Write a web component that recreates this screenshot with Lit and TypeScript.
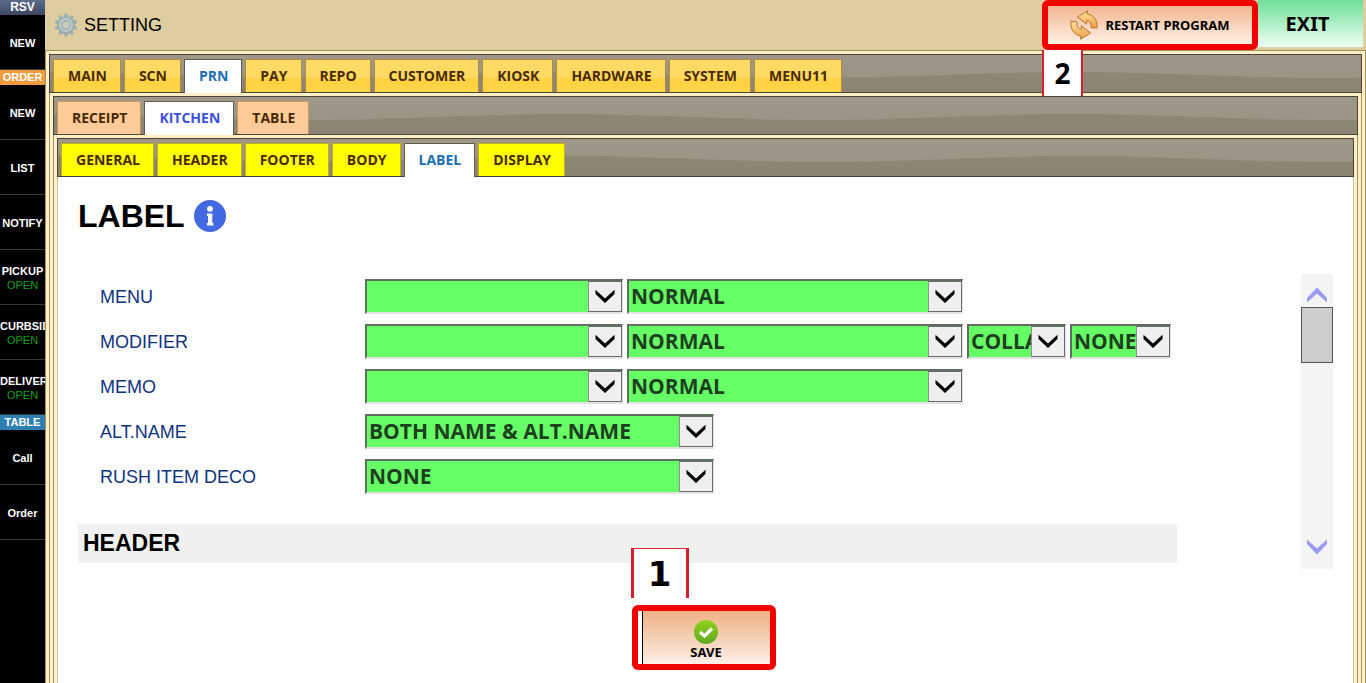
import { LitElement, html, css, svg, nothing } from "lit";
import { customElement, property, state } from "lit/decorators.js";

const gear = html`<svg class="gear" viewBox="0 0 24 24" width="24" height="24" aria-hidden="true">
  <g fill="#a3b1b5">
    ${[0, 36, 72, 108, 144, 180, 216, 252, 288, 324].map(
      (a) => svg`<path transform="rotate(${a} 12 12)" d="M9.800 4 L10.600 0.500 H13.400 L14.200 4 Z"></path>`
    )}
  </g>
  <circle cx="12" cy="12" r="8" fill="#bccaca" stroke="#98a8ac" stroke-width="1.600"></circle>
  <circle cx="12" cy="12" r="4.200" fill="#c9cdbc" stroke="#96a7ab" stroke-width="1.200"></circle>
</svg>`;

const refresh = html`<svg viewBox="0 0 28 30" width="28" height="30" aria-hidden="true">
  <defs>
    <linearGradient id="arrow" x1="0" y1="0" x2="0" y2="1">
      <stop offset="0" stop-color="#fde29a"></stop>
      <stop offset="1" stop-color="#f0a04a"></stop>
    </linearGradient>
  </defs>
  <g fill="url(#arrow)" stroke="#b8742c" stroke-width="1" stroke-linejoin="round">
    <path d="M7.500 7 L17.500 0.800 L17.200 4 C24 5 28 11 27 18 L21 17.500 C21.500 13.500 20 11 16.800 10.500 L16.500 14 Z"></path>
    <path d="M20.500 23 L10.500 29.200 L10.800 26 C4 25 0 19 1 11 L7 12 C6.500 16 8 19 11.200 19.500 L11.500 16 Z"></path>
  </g>
</svg>`;

const check = html`<svg viewBox="0 0 24 24" width="24" height="24" aria-hidden="true">
  <defs>
    <linearGradient id="disc" x1="0" y1="0" x2="0" y2="1">
      <stop offset="0" stop-color="#8fd21c"></stop>
      <stop offset="1" stop-color="#5fa822"></stop>
    </linearGradient>
  </defs>
  <circle cx="12" cy="12" r="12" fill="url(#disc)"></circle>
  <path d="M6 12 L10.500 16 L18 8.500" fill="none" stroke="#fff" stroke-width="3.2"></path>
</svg>`;

const info = html`<svg viewBox="0 0 32 32" width="32" height="32" role="img" aria-label="Information">
  <circle cx="16" cy="16" r="16" fill="#4169e1"></circle>
  <circle cx="16" cy="8.800" r="2.900" fill="#fff"></circle>
  <path d="M13 13.500 H18.300 V23 H19.300 V25.500 H13 V23 H14 V16 H13 Z" fill="#fff"></path>
</svg>`;

const chevron = (color: string, d: string) => html`<svg viewBox="0 0 20 16" width="20" height="16" aria-hidden="true">
  <path d=${d} fill=${color}></path>
</svg>`;

const DOWN = "M0.500 0.800 L10 9.500 L19.500 0.800 V5 L10 14 L0.500 5 Z";
const SCROLL_UP = "M0 15.500 V11 L10 0.500 L20 11 V15.500 L10 6.500 Z";
const SCROLL_DOWN = "M0 0.500 V5 L10 15.500 L20 5 V0.500 L10 9.500 Z";

@customElement("drop-down")
class DropDown extends LitElement {
  @property() label = "";
  @property() value = "";
  @property() size = "medium";

  static styles = css`
    :host { display: block; flex: none; }
    .box {
      display: grid;
      grid-template-columns: 1fr 34px;
      height: 35px;
      box-sizing: border-box;
      border: 2px solid;
      border-right-width: 1px;
      border-color: #5f6f60 #e3e3e3 #e3e3e3 #5f6f60;
      background: #66ff66;
    }
    .small { width: 99px; }
    .compact { width: 101px; }
    .medium { width: 258px; }
    .large { width: 336px; }
    .wide { width: 349px; }
    select {
      grid-area: 1 / 1 / 2 / 3;
      appearance: none;
      min-width: 0;
      margin: 0;
      padding: 0 34px 0 2px;
      border: 0;
      border-radius: 0;
      outline: 0;
      background: transparent;
      color: #1e4020;
      font: 700 21px/31px "Open Sans", sans-serif;
      text-overflow: clip;
    }
    .arrow {
      grid-area: 1 / 2 / 2 / 3;
      display: grid;
      place-items: center;
      border: 1px solid #6b6b6b;
      border-left-color: #8f8f8f;
      background: #efefef;
      pointer-events: none;
    }
  `;

  render() {
    return html`<div class="box ${this.size}">
      <select aria-label=${this.label}><option>${this.value}</option></select>
      <span class="arrow">${chevron("#000", DOWN)}</span>
    </div>`;
  }
}

@customElement("tab-strip")
class TabStrip extends LitElement {
  @property({ type: Array }) tabs: string[] = [];
  @property() tone = "gold";
  @property() selected = "";

  static styles = css`
    :host { display: block; }
    .strip {
      display: flex;
      gap: 3px;
      height: 39px;
      box-sizing: border-box;
      padding: 4px 3px 0;
      border: 1px solid #4b4238;
      background:
        url("data:image/svg+xml,%3Csvg xmlns='http://www.w3.org/2000/svg' width='510' height='37'%3E%3Cpath d='M0 17 C90 17 165 23 255 23 S420 17 510 17 V37 H0Z' fill='%23756b58' fill-opacity='.32'/%3E%3C/svg%3E") repeat-x,
        linear-gradient(#9f9787, #9b9383 60%, #989080);
    }
    button {
      box-sizing: border-box;
      height: 33px;
      margin: 0;
      padding: 0 13px 0 14px;
      border: 1px solid #b58b3c;
      border-bottom: 0;
      border-radius: 0;
      font: 700 14px/32px "Open Sans", sans-serif;
      color: #4a2a00;
      white-space: nowrap;
    }
    .gold button { background: linear-gradient(#ffdb68, #ffd95f 55%, #ffd13e 60%, #ffd64a); }
    .peach button { background: #ffcc99; border-color: #c9985f; }
    .lemon button { background: #ffff00; border-color: #c3ae1e; }
    .strip .on {
      height: 34px;
      padding-bottom: 1px;
      background: #fff;
      color: #1b6fb5;
      border-color: #655c50;
    }
    .peach .on { color: #3c50e0; }
  `;

  render() {
    return html`<nav class="strip ${this.tone}" role="tablist">
      ${this.tabs.map((t) => html`<button
        role="tab"
        aria-selected=${t === this.selected}
        class=${t === this.selected ? "on" : ""}
        @click=${() => (this.selected = t)}
      >${t}</button>`)}
    </nav>`;
  }
}

interface Cell { text: string; kind?: string; open?: boolean }

@customElement("side-bar")
class SideBar extends LitElement {
  static styles = css`
    :host { display: block; width: 45px; flex: none; background: #000; overflow: hidden; }
    .head {
      height: 15px;
      font: 700 12px/15px "Liberation Sans", sans-serif;
      color: #fff;
      text-align: center;
    }
    .rsv { background: linear-gradient(#5d6b8c, #3c4763); }
    .order { font-size: 11px; background: #f39a3e; }
    .table { font-size: 11px; background: #2f7fb3; }
    button {
      display: flex;
      flex-direction: column;
      align-items: safe center;
      justify-content: center;
      box-sizing: border-box;
      width: 100%;
      height: 55px;
      padding: 2px 0 0;
      border: 0;
      border-bottom: 1px solid #3a3a3a;
      background: #000;
      color: #fff;
      font: 700 11px/14px "Liberation Sans", sans-serif;
      overflow: hidden;
    }
    .open { color: #14a01e; font-weight: 400; }
  `;

  private cells: Cell[] = [
    { text: "RSV", kind: "rsv" },
    { text: "NEW" },
    { text: "ORDER", kind: "order" },
    { text: "NEW" },
    { text: "LIST" },
    { text: "NOTIFY" },
    { text: "PICKUP", open: true },
    { text: "CURBSID", open: true },
    { text: "DELIVER", open: true },
    { text: "TABLE", kind: "table" },
    { text: "Call" },
    { text: "Order" },
  ];

  render() {
    return this.cells.map((c) =>
      c.kind
        ? html`<div class="head ${c.kind}">${c.text}</div>`
        : html`<button><span>${c.text}</span>${c.open ? html`<span class="open">OPEN</span>` : nothing}</button>`
    );
  }
}

@customElement("app-root")
class AppRoot extends LitElement {
  @state() private rows = [
    { label: "MENU", fields: [["", "medium"], ["NORMAL", "large"]] },
    { label: "MODIFIER", fields: [["", "medium"], ["NORMAL", "large"], ["COLLAPSE", "small"], ["NONE", "compact"]] },
    { label: "MEMO", fields: [["", "medium"], ["NORMAL", "large"]] },
    { label: "ALT.NAME", fields: [["BOTH NAME & ALT.NAME", "wide"]] },
    { label: "RUSH ITEM DECO", fields: [["NONE", "wide"]] },
  ];

  static styles = css`
    :host {
      display: flex;
      min-height: 100vh;
      font-family: "Liberation Sans", sans-serif;
      color: #000;
    }
    .main { flex: 1; min-width: 0; display: flex; flex-direction: column; }
    .top {
      display: flex;
      align-items: center;
      height: 50px;
      padding: 0 3px 0 9px;
      background: #decd9e;
    }
    .gear { margin-right: 6px; }
    .title { flex: 1; font-size: 18px; line-height: 24px; font-weight: 400; margin: 0; }
    button { margin: 0; padding: 0; border-radius: 0; color: #000; }
    .restart-wrap { position: relative; align-self: stretch; display: flex; }
    .restart {
      display: flex;
      align-items: center;
      justify-content: center;
      gap: 7px;
      box-sizing: border-box;
      width: 216px;
      border: 6px solid #f20000;
      border-radius: 6px;
      background: linear-gradient(#f3b68e, #fdf0e6);
      font: 700 13px/16px "Noto Sans", sans-serif;
    }
    .exit {
      align-self: stretch;
      width: 105px;
      margin-bottom: 3px;
      padding-right: 6px;
      border: 0;
      background: linear-gradient(#6fdf98, #eefff4);
      font: 700 20px/24px "Noto Sans", sans-serif;
    }
    .badge {
      position: absolute;
      box-sizing: border-box;
      display: grid;
      place-items: center;
      border: 2px solid #d8202c;
      border-width: 0 2px;
      background: #fff;
      font: 700 28px/40px "Noto Sans", sans-serif;
    }
    .two { left: 0; top: 50px; width: 41px; height: 46px; z-index: 1; }
    .one {
      left: -11px;
      bottom: 66px;
      width: 58px;
      height: 50px;
      border-width: 1px 3px 0;
      font: 700 34px/48px "DejaVu Sans", sans-serif;
    }
    .panel {
      flex: 1;
      display: flex;
      flex-direction: column;
      padding: 3px 3px 0;
      border: 1px solid #a3905c;
      border-width: 0 1px;
      background: #fdf0c6;
    }
    .outer { border-top-width: 1px; }
    .content {
      flex: 1;
      padding: 20px 20px 0;
      border: 1px solid #cfc4a0;
      border-width: 0 1px;
      background: #fff;
    }
    .heading { display: flex; align-items: center; gap: 9px; margin-bottom: 39px; }
    h1 { margin: 0; font-size: 32px; line-height: 38px; }
    .scroller { display: flex; justify-content: space-between; gap: 124px; }
    .form { flex: 1; min-width: 0; padding-bottom: 6px; }
    .rows { display: grid; gap: 10px; padding: 5px 0 30px 22px; }
    .row { display: flex; align-items: center; gap: 4px; }
    .label { width: 261px; flex: none; font-size: 18px; line-height: 22px; color: #0f347f; }
    h2 {
      margin: 0;
      padding: 0 5px;
      background: #f0f0f0;
      font-size: 23px;
      line-height: 39px;
    }
    .track {
      display: flex;
      flex-direction: column;
      width: 32px;
      background: #f4f4f4;
    }
    .track button {
      display: grid;
      place-items: center;
      height: 33px;
      border: 0;
      background: none;
    }
    .track .up { padding-top: 8px; }
    .track .down { margin-top: auto; padding-bottom: 6px; height: 38px; }
    .thumb { height: 54px; border: 1px solid #555; background: #cdcdcd; }
    .actions { display: flex; justify-content: center; padding: 42px 0 13px; }
    .save-wrap { position: relative; }
    .save {
      display: flex;
      flex-direction: column;
      align-items: center;
      justify-content: center;
      box-sizing: border-box;
      width: 128px;
      height: 53px;
      padding-top: 4px;
      border: 0;
      border-left: 1px solid #000;
      background: linear-gradient(#f0b084, #fdf0e6);
      font: 700 13px/16px "Noto Sans", sans-serif;
    }
    .ring {
      position: absolute;
      inset: -6px -6px -6px -10px;
      border: 6px solid #f20000;
      border-radius: 6px;
      pointer-events: none;
    }
  `;

  render() {
    return html`
      <side-bar></side-bar>
      <div class="main">
        <header class="top">
          ${gear}
          <h3 class="title">SETTING</h3>
          <div class="restart-wrap">
            <button class="restart">${refresh}<span>RESTART PROGRAM</span></button>
            <span class="badge two">2</span>
          </div>
          <button class="exit">EXIT</button>
        </header>
        <div class="panel outer">
          <tab-strip
            .tabs=${["MAIN", "SCN", "PRN", "PAY", "REPO", "CUSTOMER", "KIOSK", "HARDWARE", "SYSTEM", "MENU11"]}
            selected="PRN"
          ></tab-strip>
          <div class="panel">
            <tab-strip tone="peach" .tabs=${["RECEIPT", "KITCHEN", "TABLE"]} selected="KITCHEN"></tab-strip>
            <div class="panel">
              <tab-strip
                tone="lemon"
                .tabs=${["GENERAL", "HEADER", "FOOTER", "BODY", "LABEL", "DISPLAY"]}
                selected="LABEL"
              ></tab-strip>
              <main class="content">
                <div class="heading"><h1>LABEL</h1>${info}</div>
                <div class="scroller">
                  <div class="form">
                    <div class="rows">
                      ${this.rows.map((r) => html`<div class="row">
                        <span class="label">${r.label}</span>
                        ${r.fields.map(([value, size]) => html`<drop-down .label=${r.label} .value=${value} .size=${size}></drop-down>`)}
                      </div>`)}
                    </div>
                    <h2>HEADER</h2>
                  </div>
                  <div class="track">
                    <button class="up" aria-label="Scroll up">${chevron("#9a9af5", SCROLL_UP)}</button>
                    <div class="thumb"></div>
                    <button class="down" aria-label="Scroll down">${chevron("#9a9af5", SCROLL_DOWN)}</button>
                  </div>
                </div>
                <div class="actions">
                  <div class="save-wrap">
                    <button class="save">${check}<span>SAVE</span></button>
                    <span class="ring"></span>
                    <span class="badge one">1</span>
                  </div>
                </div>
              </main>
            </div>
          </div>
        </div>
      </div>
    `;
  }
}
